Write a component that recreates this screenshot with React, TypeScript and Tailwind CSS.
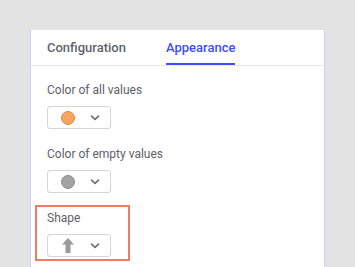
import { ReactNode } from 'react';

const font = { fontFamily: 'Roboto, "Liberation Sans", sans-serif' };

function Chevron() {
  return (
    <svg width="10" height="6" viewBox="0 0 10 6" className="text-[#6b6f7a]">
      <path d="M1.5 1.2l3.5 3.2 3.5-3.2" fill="none" stroke="currentColor" strokeWidth="1.7" strokeLinecap="round" strokeLinejoin="round" />
    </svg>
  );
}

function Picker({ children }: { children: ReactNode }) {
  return (
    <div className="mt-2 flex h-[23px] w-[64px] items-center rounded-[3px] border border-[#d3d5dc] bg-white pl-[12px]">
      <div className="flex w-[16px] justify-center">{children}</div>
      <div className="ml-[14px] flex items-center">
        <Chevron />
      </div>
    </div>
  );
}

function Field({ label, children }: { label: string; children: ReactNode }) {
  return (
    <div>
      <div className="h-4 text-[12px] leading-4 text-[#5f6066]">{label}</div>
      <Picker>{children}</Picker>
    </div>
  );
}

export default function App() {
  return (
    <div className="h-[267px] w-[355px] overflow-hidden bg-[#e3e3e3] pl-[30px] pt-[30px]" style={font}>
      <div className="h-full w-[295px] border-x border-[#c6d3f8] bg-white">
        {/* Tabs */}
        <div className="flex h-[36px] border-b border-[#e6e8ee] pl-4">
          <div className="flex h-full items-center text-[13px] font-medium text-[#606369]">Configuration</div>
          <div className="relative ml-[40px] flex h-full items-center text-[13px] font-medium text-[#3d4ff0]">
            Appearance
            <span className="absolute bottom-0 left-0 right-0 h-[2px] bg-[#3d4ff0]" />
          </div>
        </div>

        {/* Content */}
        <div className="flex flex-col gap-[17px] pl-4 pt-[16px]">
          <Field label="Color of all values">
            <span className="block h-[14px] w-[14px] rounded-full border border-[#d98a4c] bg-[#f9a35f]" />
          </Field>
          <Field label="Color of empty values">
            <span className="block h-[14px] w-[14px] rounded-full border border-[#8c8c8c] bg-[#a3a3a3]" />
          </Field>
          <div className="relative">
            <span className="pointer-events-none absolute left-[-12px] top-[-5px] h-[56px] w-[95px] border-2 border-[#f07a62]" />
            <Field label="Shape">
              <svg width="12" height="15" viewBox="0 0 12 15">
                <path d="M6 0L12 6.5H8.5V15h-5V6.5H0z" fill="#9a9a9a" />
              </svg>
            </Field>
          </div>
        </div>
      </div>
    </div>
  );
}
